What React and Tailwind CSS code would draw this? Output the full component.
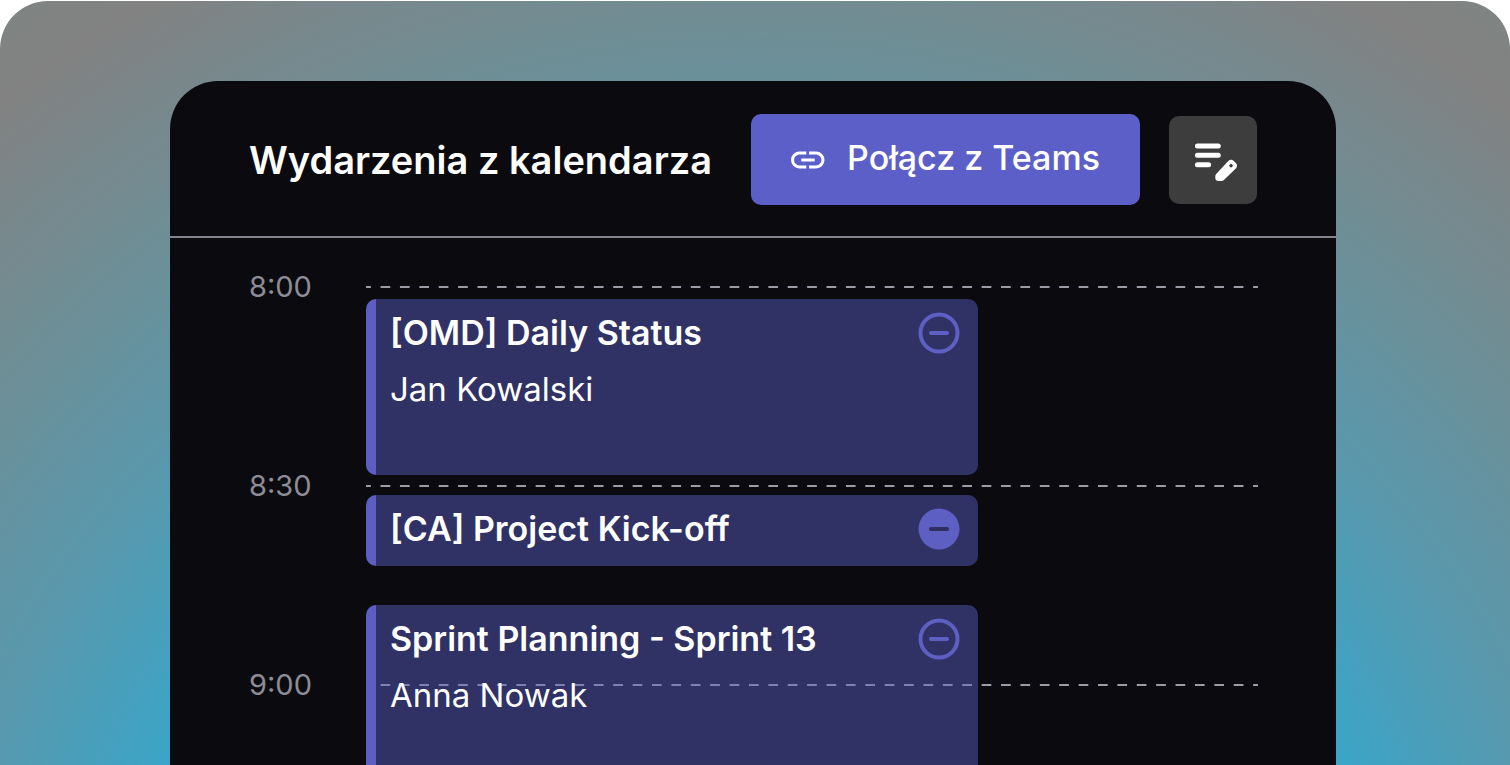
import React from "react";

const HOURS = ["8:00", "8:30", "9:00"];

const EVENTS = [
  { title: "[OMD] Daily Status", person: "Jan Kowalski", height: "h-44", filled: false },
  { title: "[CA] Project Kick-off", person: null, height: "mt-5 h-[71px]", filled: true },
  { title: "Sprint Planning - Sprint 13", person: "Anna Nowak", height: "mt-[39px] h-44", filled: false },
];

function LinkIcon() {
  return (
    <svg width="34" height="18" viewBox="0 0 34 18" fill="none" stroke="currentColor" strokeWidth="3" aria-hidden="true">
      <path d="M15.3 2.1H8.4a6.9 6.9 0 0 0 0 13.8h6.9" />
      <path d="M18 2.1h7.1a6.9 6.9 0 0 1 0 13.8H18" />
      <path d="M10.3 9h13.4" />
    </svg>
  );
}

function EditListIcon() {
  return (
    <svg width="48" height="48" viewBox="0 0 48 48" fill="none" aria-hidden="true">
      <path d="M8.4 10h20.9M8.4 19.3h20.9M8.4 28.7h11.2" stroke="white" strokeWidth="5" strokeLinecap="round" />
      <path
        fill="white"
        fillRule="evenodd"
        d="M26.3 40.2c0-.9.3-1.700.9-2.300L39.300 25c1.600-1.700 3.900-1.700 5.500-.1l2 2c1.600 1.600 1.600 3.900 0 5.500L34.900 44.100c-.6.6-1.400.9-2.300.9H29.300c-1.700 0-3-1.300-3-3ZM42 27.500 39.900 29.700 42 31.800 44.200 29.700Z"
      />
    </svg>
  );
}

function MinusIcon({ filled }) {
  return (
    <svg width="42" height="42" viewBox="0 0 42 42" fill="none" aria-hidden="true">
      {filled ? (
        <circle cx="21" cy="21" r="20.500" fill="#5d5fc3" />
      ) : (
        <circle cx="21" cy="21" r="18.500" stroke="#5d5fc3" strokeWidth="4" />
      )}
      <path d="M13 21h16" stroke={filled ? "#303060" : "#5d5fc3"} strokeWidth="4.200" strokeLinecap="round" />
    </svg>
  );
}

function Event({ title, person, height, filled }) {
  return (
    <li className={`flex shrink-0 overflow-hidden rounded-[10px] ${height}`}>
      <span className="w-[10px] shrink-0 bg-[#5c5ec2]" />
      <div className="flex flex-1 items-start justify-between bg-[#5d5fc8]/46 pt-[13px] pr-[18px] pl-[14px]">
        <div>
          <h2 className="text-[34px] leading-[42px] font-semibold">{title}</h2>
          {person && <p className="mt-[14px] text-[33px] leading-[42px]">{person}</p>}
        </div>
        <button type="button" aria-label={`Usuń ${title}`}>
          <MinusIcon filled={filled} />
        </button>
      </div>
    </li>
  );
}

export default function App() {
  return (
    <div className="h-screen overflow-hidden bg-white pt-px font-['Inter','Liberation_Sans',sans-serif] text-white">
      <div className="h-full rounded-t-[48px] bg-[radial-gradient(circle_1200px_at_50%_1040px,#39a6ca_53%,#5898ad_68%,#6f8e95_84%,#79878b_93%,#828282_100%,#7f8482_106%)] pt-20 pr-[174px] pl-[170px]">
        <main className="h-full overflow-hidden rounded-t-[48px] bg-[#0b0b0f]">
          <header className="flex items-center border-b-2 border-[#85838d] pt-[33px] pr-[79px] pb-[31px] pl-[79px]">
            <h1 className="flex-1 text-[38px] leading-[48px] font-semibold whitespace-nowrap">Wydarzenia z kalendarza</h1>
            <button
              type="button"
              className="flex h-[91px] w-[389px] items-center justify-center gap-[22px] rounded-[10px] bg-[#5d5fc8] text-[34px] leading-[44px] font-medium whitespace-nowrap"
            >
              <LinkIcon />
              <span className="pb-1">Połącz z Teams</span>
            </button>
            <button
              type="button"
              aria-label="Edytuj listę"
              className="ml-[29px] flex size-[88px] items-center justify-center rounded-[10px] bg-[#3d3d3d]"
            >
              <EditListIcon />
            </button>
          </header>
          <section className="grid pt-7 pr-[78px] pl-[79px]">
            <ol className="[grid-area:1/1]">
              {HOURS.map((hour) => (
                <li key={hour} className="flex h-[199px] items-start">
                  <time className="w-[117px] shrink-0 text-[29px] leading-[42px] text-[#8e8c96]">{hour}</time>
                  <span className="mt-5 h-[2px] flex-1 bg-[linear-gradient(90deg,#9d9ba5_25%,transparent_25%_75%,#9d9ba5_75%)] bg-[length:calc(100%/46)_2px]" />
                </li>
              ))}
            </ol>
            <ul className="ml-[117px] flex w-[612px] flex-col pt-[33px] [grid-area:1/1]">
              {EVENTS.map((event) => (
                <Event key={event.title} {...event} />
              ))}
            </ul>
          </section>
        </main>
      </div>
    </div>
  );
}
